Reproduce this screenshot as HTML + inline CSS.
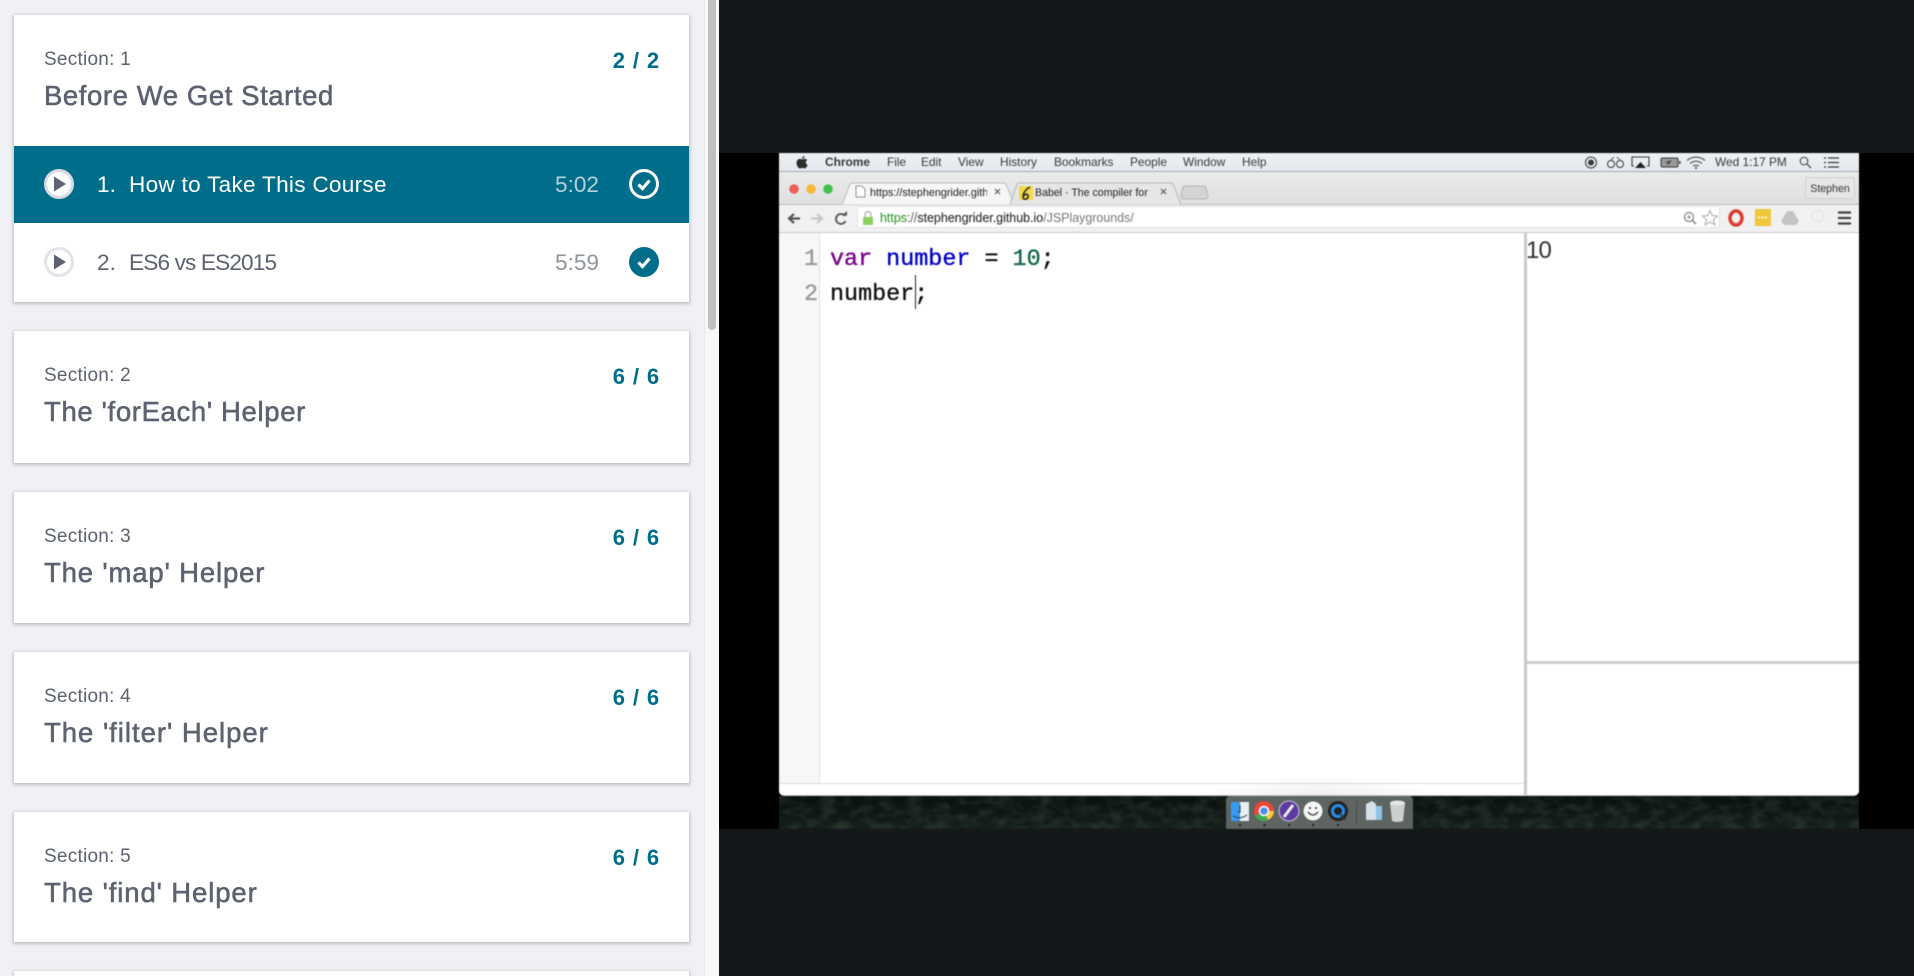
<!DOCTYPE html>
<html lang="en"><head><meta charset="utf-8"><title>Course</title>
<style>
html,body{margin:0;padding:0;width:1914px;height:976px;overflow:hidden;background:#14181b;font-family:"Liberation Sans",sans-serif}
*{box-sizing:border-box}
.a{position:absolute;white-space:nowrap}
#side{position:absolute;left:0;top:0;width:719px;height:976px;background:#eff1f5;overflow:hidden}
#track{position:absolute;left:704px;top:0;width:15px;height:976px;background:#f7f7f8;border-left:1px solid #e6e7ea}
#thumb{position:absolute;left:708px;top:0;width:8px;height:330px;background:#bfbfbf;border-radius:0 0 4px 4px}
.card{position:absolute;left:14px;width:675px;background:#fff;box-shadow:0 1px 3px 1px rgba(60,64,75,.28)}
.sec{position:absolute;left:30px;top:33px;font-size:19px;line-height:24px;color:#5c6270;white-space:nowrap;letter-spacing:.25px}
.ttl{position:absolute;left:30px;top:65px;font-size:27.5px;line-height:32px;color:#5c6270;white-space:nowrap;-webkit-text-stroke:.55px #5c6270}
.cnt{position:absolute;right:29px;top:34px;font-size:22px;line-height:24px;font-weight:bold;color:#006e8a;white-space:nowrap;letter-spacing:.9px}
.row{position:absolute;left:0;width:675px;height:77px;font-size:22.6px;color:#5c6270}
#vid{position:absolute;left:719px;top:153px;width:1195px;height:676px;background:#000;overflow:hidden}
#scr{position:absolute;left:0;top:0;width:1914px;height:976px;filter:blur(.45px)}
.m{position:absolute;top:155px;font-size:11.9px;line-height:15px;color:#3a3a3a;white-space:nowrap}
.code{position:absolute;font-family:"Liberation Mono",monospace;font-size:23.4px;line-height:28px;white-space:pre;color:#111;-webkit-text-stroke:.35px currentColor}
</style></head><body>
<div id="side">
  <div class="card" style="top:15px;height:287px">
    <div class="sec">Section: 1</div><div class="ttl" style="letter-spacing:.58px">Before We Get Started</div><div class="cnt">2 / 2</div>
    <div class="row" style="top:131px;background:#006e8a;color:#fff">
      <span class="a" style="left:83px;top:24px;line-height:30px">1.</span>
      <span class="a" style="left:115px;top:24px;line-height:30px;letter-spacing:.27px">How to Take This Course</span>
      <span class="a" style="right:90px;top:24px;line-height:30px;color:#b6d0d9">5:02</span>
    </div>
    <div class="row" style="top:208px;">
      <span class="a" style="left:83px;top:25px;line-height:30px">2.</span>
      <span class="a" style="left:115px;top:25px;line-height:30px;letter-spacing:-.85px">ES6 vs ES2015</span>
      <span class="a" style="right:90px;top:25px;line-height:30px;color:#8f939d">5:59</span>
    </div>
  </div>
  <div class="card" style="top:331px;height:132px"><div class="sec">Section: 2</div><div class="ttl" style="letter-spacing:.65px">The 'forEach' Helper</div><div class="cnt">6 / 6</div></div>
  <div class="card" style="top:492px;height:131px"><div class="sec">Section: 3</div><div class="ttl" style="letter-spacing:.85px">The 'map' Helper</div><div class="cnt">6 / 6</div></div>
  <div class="card" style="top:652px;height:131px"><div class="sec">Section: 4</div><div class="ttl" style="letter-spacing:.98px">The 'filter' Helper</div><div class="cnt">6 / 6</div></div>
  <div class="card" style="top:812px;height:130px"><div class="sec">Section: 5</div><div class="ttl" style="letter-spacing:.89px">The 'find' Helper</div><div class="cnt">6 / 6</div></div>
  <div class="card" style="top:971px;height:40px"></div>
  <svg class="a" style="left:0;top:0" width="704" height="300" viewBox="0 0 704 300">
    <circle cx="59" cy="184" r="13.5" fill="#fff" stroke="#d9dbe1" stroke-width="3"/>
    <path d="M54 176.500L66 184L54 191.500Z" fill="#5c6270"/>
    <circle cx="59" cy="262" r="13.5" fill="#fff" stroke="#e2e4ea" stroke-width="3"/>
    <path d="M54 254.500L66 262L54 269.500Z" fill="#5c6270"/>
    <circle cx="644" cy="184" r="13.500" fill="none" stroke="#fff" stroke-width="3"/>
    <path d="M638.500 184.500L642.500 188.500L649.500 180.500" fill="none" stroke="#fff" stroke-width="3.200"/>
    <circle cx="644" cy="262" r="15" fill="#006e8a"/>
    <path d="M638.500 262.500L642.500 266.500L649.500 258.500" fill="none" stroke="#fff" stroke-width="3.200"/>
  </svg>
  <div id="track"></div><div id="thumb"></div>
</div>

<div id="vid"></div>
<div id="scr">
  <!-- wallpaper -->
  <div class="a" style="left:779px;top:796px;width:1080px;height:33px;background:linear-gradient(180deg,#0a100e 0%,#0f1714 55%,#16201c 100%)"></div>
  <svg class="a" style="left:779px;top:796px" width="1080" height="33" viewBox="0 0 1080 33">
    <defs><filter id="n" x="0" y="0" width="100%" height="100%"><feTurbulence type="fractalNoise" baseFrequency=".07 .11" numOctaves="2" seed="4"/><feColorMatrix values="0 0 0 0 .16  0 0 0 0 .24  0 0 0 0 .19  1.6 0 0 0 -.6"/></filter></defs>
    <rect width="1080" height="33" filter="url(#n)" opacity=".3"/>
  </svg>
  <!-- window white -->
  <div class="a" style="left:779px;top:172px;width:1080px;height:624px;background:#fff;border-radius:0 0 5px 5px;border-bottom:1px solid #c8c8c8"></div>
  <!-- menu bar -->
  <div class="a" style="left:779px;top:153px;width:1080px;height:19px;background:linear-gradient(#edf0f4,#e5e9ee);border-bottom:1px solid #a7abae"></div>
  <svg class="a" style="left:795px;top:155px" width="14" height="15" viewBox="0 0 14 15"><path d="M9.500 1C9.500 2.500 8.300 3.700 7 3.700C7 2.300 8.200 1.100 9.500 1ZM7.100 4.300C7.800 4.300 8.600 3.700 9.700 3.700C10.700 3.700 11.600 4.200 12.200 5C10.200 6.200 10.500 9 12.600 9.900C12.100 11.400 10.800 13.500 9.700 13.500C8.800 13.500 8.300 12.900 7.300 12.900C6.300 12.900 5.700 13.500 4.900 13.500C3.400 13.500 1.500 10.500 1.500 8C1.500 5.400 3.200 3.900 4.700 3.900C5.700 3.900 6.500 4.300 7.100 4.300Z" fill="#2e2e2e"/></svg>
  <div class="m" style="left:825px;font-weight:bold">Chrome</div>
  <div class="m" style="left:887px">File</div>
  <div class="m" style="left:921px">Edit</div>
  <div class="m" style="left:958px">View</div>
  <div class="m" style="left:1000px">History</div>
  <div class="m" style="left:1054px">Bookmarks</div>
  <div class="m" style="left:1130px">People</div>
  <div class="m" style="left:1183px">Window</div>
  <div class="m" style="left:1242px">Help</div>
  <div class="m" style="left:1715px">Wed 1:17 PM</div>
  <svg class="a" style="left:1580px;top:153px" width="265" height="19" viewBox="1580 153 265 19" fill="none" stroke="#3a3a3a">
    <circle cx="1591" cy="162.500" r="5.500" stroke-width="1"/><circle cx="1591" cy="162.500" r="3" fill="#3a3a3a" stroke="none"/>
    <circle cx="1611" cy="164" r="3.500" stroke-width="1"/><circle cx="1620" cy="164" r="3.500" stroke-width="1"/><path d="M1611 160L1614 157M1620 160L1617 157" stroke-width=".8"/>
    <path d="M1634 166H1632V157H1649V166H1647" stroke-width="1.100"/><path d="M1635 168L1640.500 162L1646 168Z" fill="#222" stroke="none"/>
    <rect x="1661" y="158" width="17" height="9" rx="1.500" stroke-width="1" fill="#999"/><path d="M1666 162.500H1669L1668 160.500M1668 164.500L1671 160.500" stroke="#222" stroke-width=".8"/><rect x="1679" y="161" width="1.500" height="3" fill="#444" stroke="none"/>
    <path d="M1687 160.500C1692 156 1700 156 1705 160.500M1690 163.500C1693.500 160.500 1698.500 160.500 1702 163.500M1693 166C1695 165 1697 165 1699 166" stroke-width="1"/><circle cx="1696" cy="168" r="1" fill="#333" stroke="none"/>
    <circle cx="1804" cy="161" r="3.800" stroke-width="1"/><path d="M1807 164L1811 168" stroke-width="1.200"/>
    <path d="M1824 158H1826M1824 162.500H1826M1824 167H1826M1828 158H1839M1828 162.500H1839M1828 167H1839" stroke-width="1.300"/>
  </svg>
  <!-- tab bar -->
  <div class="a" style="left:779px;top:172px;width:1080px;height:33px;background:linear-gradient(#ebebeb,#dfdfdf);border-bottom:1px solid #bdbdbd"></div>
  <svg class="a" style="left:779px;top:172px" width="1080" height="34" viewBox="779 172 1080 34">
    <circle cx="794" cy="189" r="4.800" fill="#ee5f59"/><circle cx="811" cy="189" r="4.800" fill="#f6b83f"/><circle cx="828" cy="189" r="4.800" fill="#3fc14d"/>
    <path d="M842 205L850 184Q851 183 853 183H1003Q1005 183 1006 184L1014 205Z" fill="#f6f6f6" stroke="#bdbdbd"/>
    <path d="M1010 205L1017 184Q1018 183 1020 183H1170Q1172 183 1173 184L1181 205Z" fill="#e6e6e6" stroke="#b9b9b9"/>
    <path d="M1181 195L1183 187Q1184 186 1186 186H1203Q1205 186 1205.500 187L1208 195Q1208 199 1205 199H1184Q1181 199 1181 195Z" fill="#d4d4d4" stroke="#b5b5b5"/>
    <path d="M856 186H862L865 189V197H856Z" fill="#fff" stroke="#777" stroke-width=".8"/>
    <path d="M995 189L1000 194M1000 189L995 194M1161 189L1166 194M1166 189L1161 194" stroke="#555" stroke-width="1.100"/>
    <rect x="1019" y="186" width="14" height="14" fill="#f2da4a"/>
    <path d="M1030 187C1026 189 1023 193 1023 197C1023 200 1027 200 1028 197C1029 194 1025 193 1024 196" fill="none" stroke="#222" stroke-width="1.500"/>
  </svg>
  <div class="a" style="left:870px;top:186px;width:117px;overflow:hidden;font-size:10.800px;line-height:14px;color:#333;-webkit-text-stroke:.1px #333">https://stephengrider.github.io</div>
  <div class="a" style="left:1035px;top:186px;width:116px;overflow:hidden;font-size:10.600px;line-height:14px;color:#333;-webkit-text-stroke:.1px #333">Babel · The compiler for writing</div>
  <div class="a" style="left:1805px;top:177px;width:50px;height:22px;border:1px solid #cfcfcf;border-radius:2px;background:#e6e6e6;text-align:center;font-size:10.600px;line-height:22px;color:#333">Stephen</div>
  <!-- toolbar -->
  <div class="a" style="left:779px;top:205px;width:1080px;height:28px;background:#f1f1f1;border-bottom:1px solid #c9c9c9"></div>
  <div class="a" style="left:857px;top:206px;width:863px;height:22px;background:#fff;border:1px solid #e2e2e2;border-radius:2px"></div>
  <svg class="a" style="left:779px;top:205px" width="1080" height="28" viewBox="779 205 1080 28">
    <path d="M800 218.500H789M794 214L789 218.500L794 223" fill="none" stroke="#555" stroke-width="2.200"/>
    <path d="M811 218.500H822M817 214L822 218.500L817 223" fill="none" stroke="#c8c8c8" stroke-width="2.200"/>
    <path d="M845 216A5 5 0 1 0 845.500 221" fill="none" stroke="#555" stroke-width="1.800"/><path d="M842 215.500H847V211Z" fill="#555"/>
    <rect x="863" y="217" width="10" height="8" rx="1" fill="#8fcf63"/><path d="M865 217V214.500A3 3 0 0 1 871 214.500V217" fill="none" stroke="#aaa" stroke-width="1.200"/>
    <circle cx="1689" cy="217" r="4.500" fill="none" stroke="#888" stroke-width="1.300"/><path d="M1692.500 220.500L1696 224" stroke="#888" stroke-width="1.600"/><path d="M1687 217H1691M1689 215V219" stroke="#888"/>
    <path d="M1710 210.500L1712.300 215.500L1717.500 216L1713.500 219.500L1714.800 224.800L1710 222L1705.200 224.800L1706.500 219.500L1702.500 216L1707.700 215.500Z" fill="none" stroke="#aaa"/>
    <ellipse cx="1736" cy="218" rx="6" ry="7" fill="none" stroke="#da3d30" stroke-width="3.500"/>
    <rect x="1755" y="209" width="16" height="17" rx="1" fill="#f0c63c"/><path d="M1758 217.500H1768" stroke="#fff" stroke-width="1.600" stroke-dasharray="2 1.200"/>
    <path d="M1787 211H1793L1799 221L1796 225H1784L1781 221Z" fill="#c4c4c4"/>
    <circle cx="1818" cy="216" r="6" fill="none" stroke="#e6e6e6" stroke-width="1.500"/>
    <path d="M1838 212.500H1851M1838 218H1851M1838 223.500H1851" stroke="#444" stroke-width="2.200"/>
  </svg>
  <div class="a" style="left:880px;top:211px;font-size:12.450px;line-height:15px;color:#333;-webkit-text-stroke:.15px #333"><span style="color:#3f9e3a;-webkit-text-stroke:.15px #3f9e3a">https</span><span style="color:#888">://</span>stephengrider.github.io<span style="color:#777;-webkit-text-stroke:0">/JSPlaygrounds/</span></div>
  <!-- editor -->
  <div class="a" style="left:779px;top:233px;width:41px;height:550px;background:#f7f7f7;border-right:1px solid #e2e2e2"></div>
  <div class="code" style="left:804px;top:246px;color:#999">1</div>
  <div class="code" style="left:804px;top:281px;color:#999">2</div>
  <div class="code" style="left:830px;top:246px"><span style="color:#770088">var</span> <span style="color:#0000cc">number</span> = <span style="color:#116644">10</span>;</div>
  <div class="code" style="left:830px;top:281px">number;</div>
  <div class="a" style="left:915px;top:275px;width:1px;height:34px;background:#222"></div>
  <div class="a" style="left:779px;top:783px;width:746px;height:1px;background:#dcdcdc"></div>
  <div class="a" style="left:1524px;top:233px;width:3px;height:563px;background:#c9c9c9"></div>
  <div class="a" style="left:1527px;top:661px;width:332px;height:3px;background:#cdcdcd"></div>
  <div class="a" style="left:1526px;top:236px;font-size:24px;line-height:30px;color:#333;letter-spacing:-.8px">10</div>
  <!-- dock -->
  <div class="a" style="left:1226px;top:796px;width:187px;height:33px;background:#5d6461;border-radius:4px 4px 0 0"></div>
  <div class="a" style="left:1200px;top:775px;width:240px;height:20px;background:radial-gradient(ellipse at 50% 100%,rgba(0,0,0,.06),rgba(0,0,0,0) 70%)"></div>
  <svg class="a" style="left:1226px;top:796px" width="187" height="33" viewBox="1226 796 187 33">
    <rect x="1231" y="802" width="9" height="19" fill="#3a9af0"/><rect x="1240" y="802" width="9" height="19" fill="#e8eef2"/>
    <path d="M1240 805V812H1238M1233 816Q1240 820 1247 815" fill="none" stroke="#1c3c5a" stroke-width="1"/>
    <circle cx="1264" cy="811" r="10" fill="#e9483a"/><path d="M1264 811L1255 816A10 10 0 0 0 1268 820Z" fill="#3cab52"/><path d="M1264 811L1274 811A10 10 0 0 1 1268 820Z" fill="#f7cb3e"/><circle cx="1264" cy="811" r="4.500" fill="#4a8ef0" stroke="#fff" stroke-width="1.500"/>
    <circle cx="1289" cy="811" r="10" fill="#5d3a9e" stroke="#b8b0cc" stroke-width="1.300"/><path d="M1284 817L1293 805" stroke="#eee" stroke-width="3"/>
    <circle cx="1313" cy="811" r="9.500" fill="#f6f6f6"/><circle cx="1310" cy="808" r="1" fill="#222"/><circle cx="1316" cy="808" r="1" fill="#222"/><path d="M1308 812Q1313 818 1318 812" fill="none" stroke="#222" stroke-width="1.100"/>
    <circle cx="1338" cy="811" r="10" fill="#222"/><circle cx="1338" cy="811" r="5.500" fill="none" stroke="#2a8ce8" stroke-width="3"/><path d="M1341 815L1345 820" stroke="#333" stroke-width="2.500"/>
    <path d="M1356.500 800V825" stroke="#4a4f4d"/>
    <path d="M1366 804L1372 801L1376 804V820H1366Z" fill="#d6e2ea"/><rect x="1376" y="806" width="6" height="14" fill="#8fc4e6"/>
    <path d="M1390 803H1405L1403 821Q1397.500 823 1392 821Z" fill="#cdd0cf"/><ellipse cx="1397.500" cy="803" rx="7.500" ry="2.500" fill="#e4e6e5"/>
    <g fill="#111"><circle cx="1240" cy="825" r="1"/><circle cx="1264.500" cy="825" r="1"/><circle cx="1289" cy="825" r="1"/><circle cx="1313" cy="825" r="1"/><circle cx="1338" cy="825" r="1"/></g>
  </svg>
</div>
</body></html>
